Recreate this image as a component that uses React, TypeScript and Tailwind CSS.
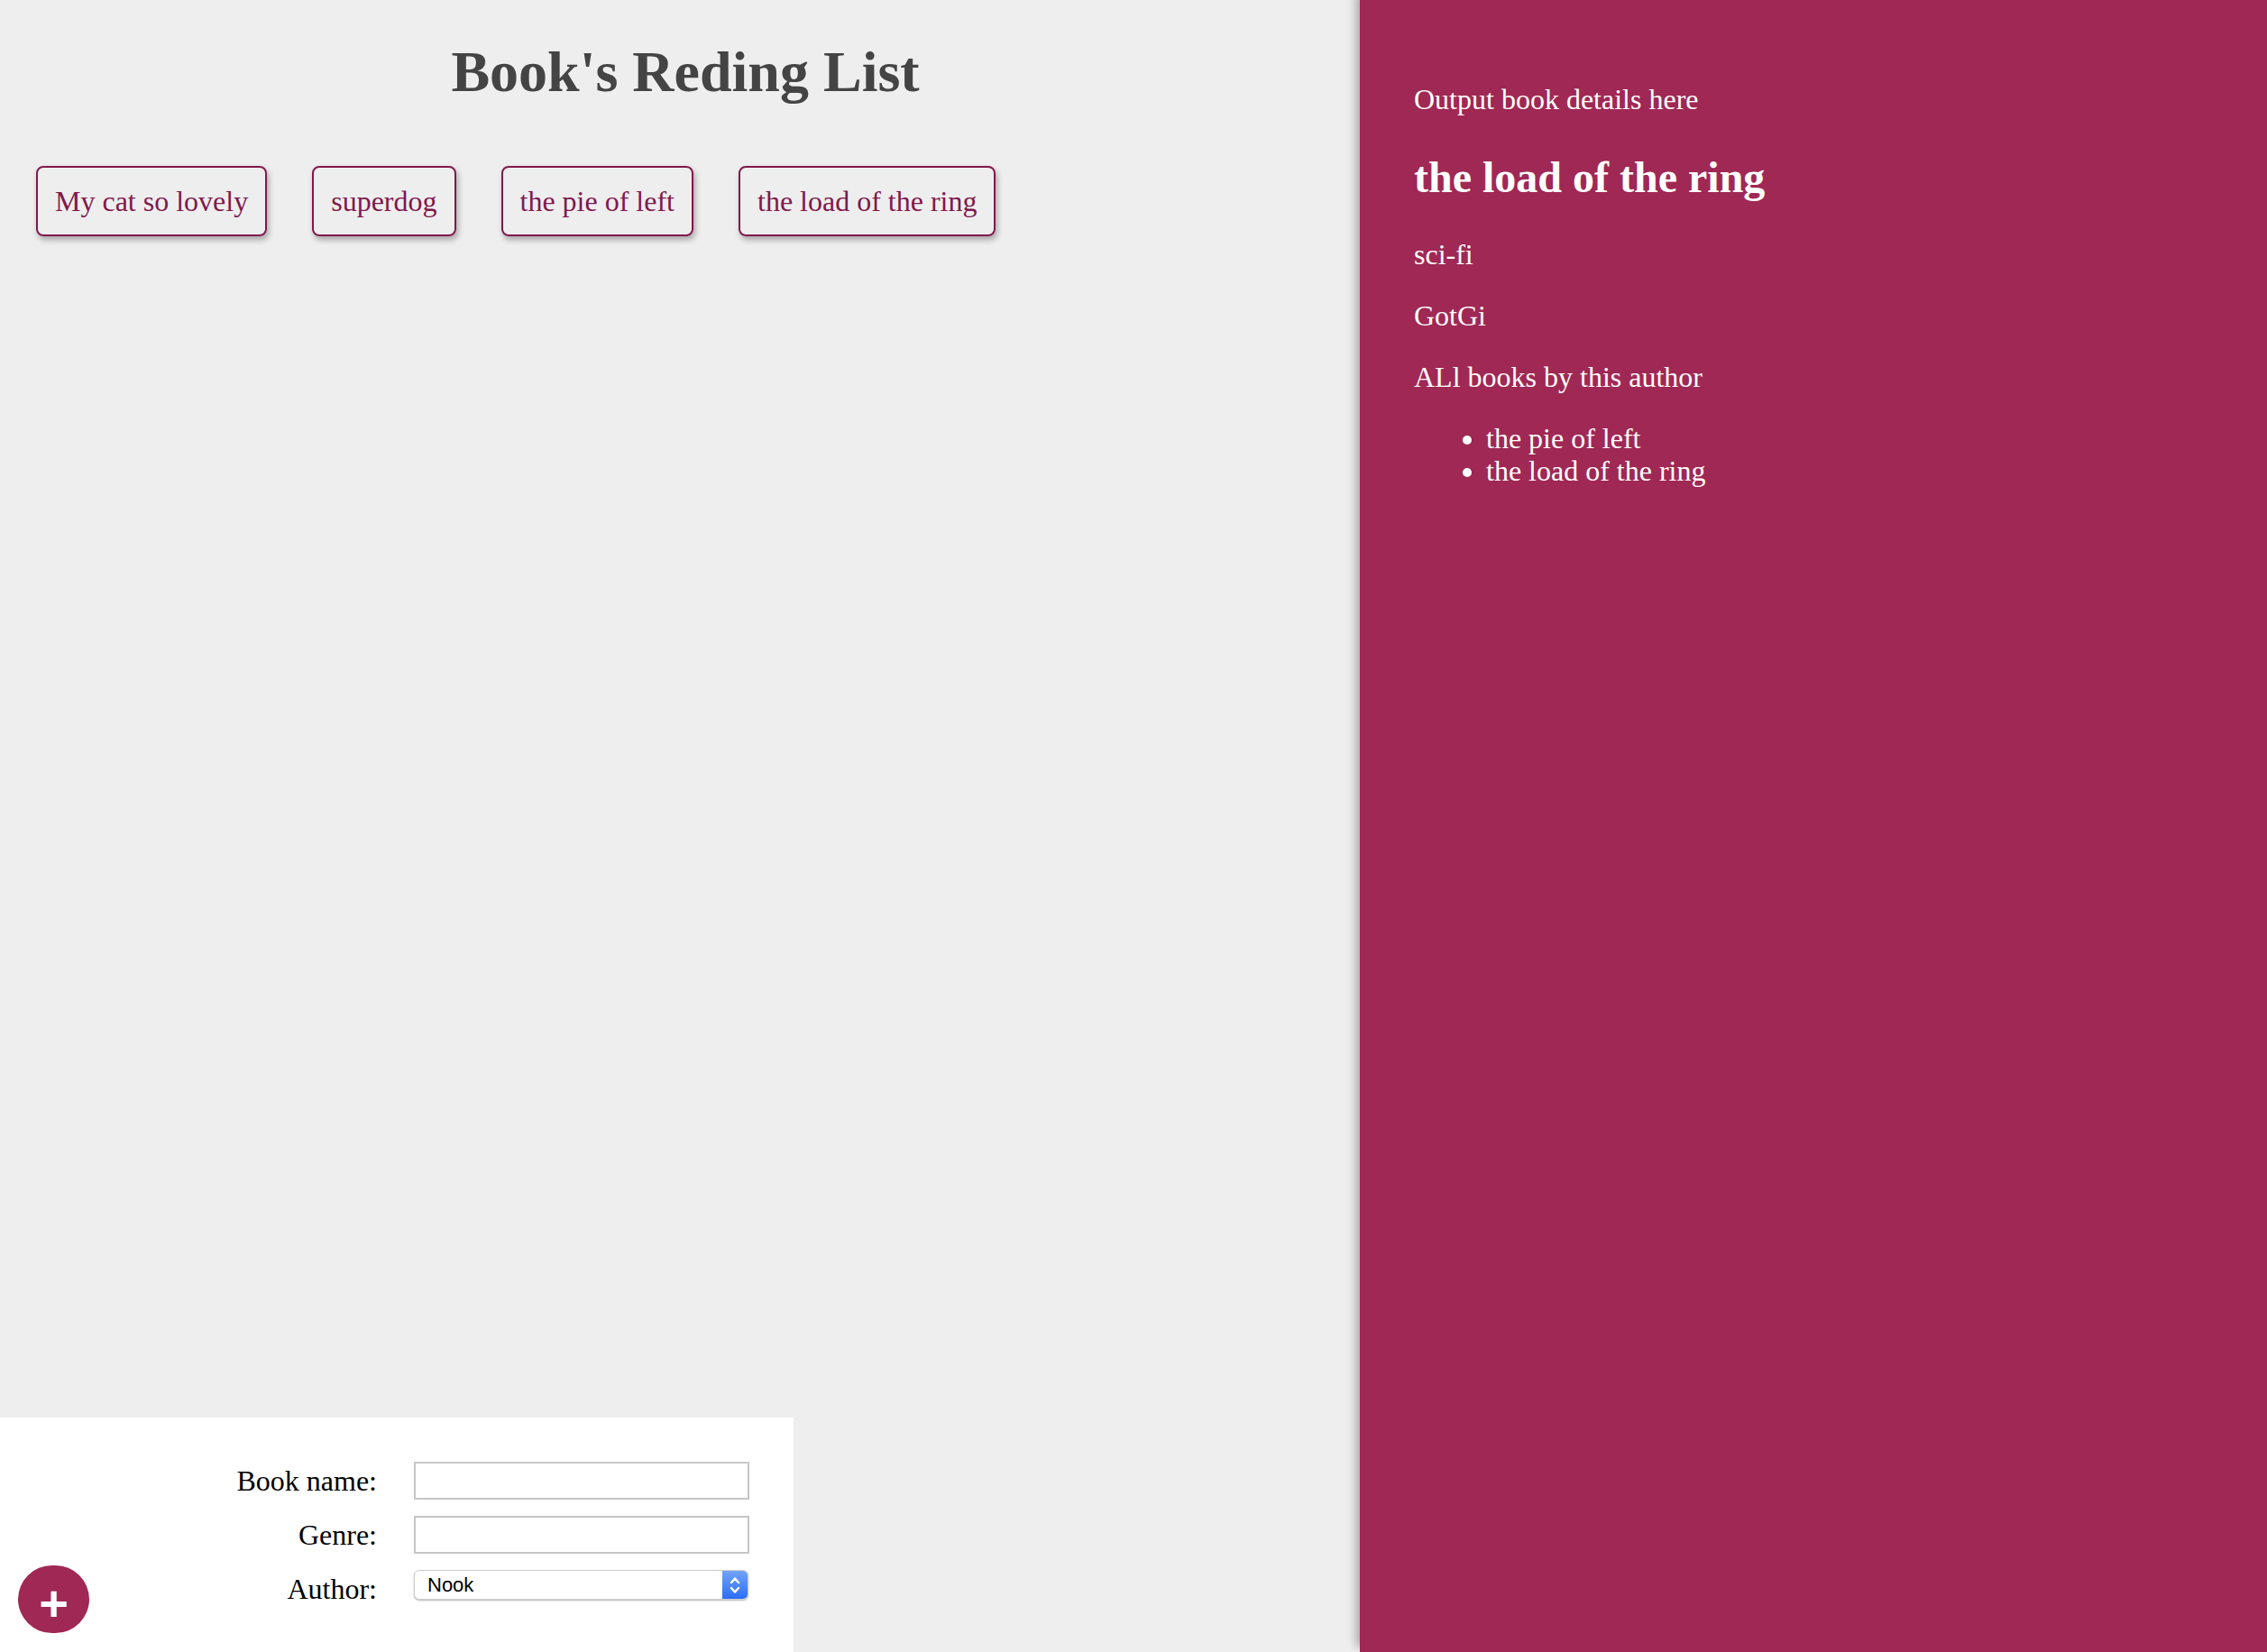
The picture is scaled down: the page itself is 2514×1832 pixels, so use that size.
import React from "react";

const books = ["My cat so lovely", "superdog", "the pie of left", "the load of the ring"];

function Field({ label, children, mt }: { label: string; children: React.ReactNode; mt: string }) {
  return (
    <div className="flex items-start h-[60px]">
      <div className="w-[390px] text-right pr-[12px] pt-[12px] text-[32px] leading-[36.8px] text-black">{label}</div>
      <div className={`ml-[29px] ${mt}`}>{children}</div>
    </div>
  );
}

export default function App() {
  return (
    <div className="w-[2514px] h-[1832px] flex bg-[#eeeeee] overflow-hidden font-['Liberation_Serif','Times_New_Roman',serif]">
      {/* Left main column */}
      <div className="w-[1508px] h-full flex flex-col px-[40px]">
        <h1 className="mt-[43px] pl-[12px] text-center text-[64px] leading-[73.6px] font-bold text-[#444444]">
          Book's Reding List
        </h1>
        <ul className="mt-[67px] flex gap-[50px] list-none p-0">
          {books.map((b) => (
            <li
              key={b}
              className="border-2 border-[#80194c] rounded-[8px] px-[19px] py-[19px] text-[32px] leading-[36px] text-[#80194c] shadow-[2px_4px_6px_rgba(0,0,0,0.3)] cursor-pointer whitespace-nowrap"
            >
              {b}
            </li>
          ))}
        </ul>
        <form className="relative mt-auto -ml-[40px] w-[880px] h-[260px] bg-white px-[40px] pt-[40px]">
          <Field label="Book name:" mt="mt-[9px]">
            <input className="block w-[372px] h-[42px] border-2 border-[#c6c6c6] bg-white outline-none" />
          </Field>
          <Field label="Genre:" mt="mt-[9px]">
            <input className="block w-[372px] h-[42px] border-2 border-[#c6c6c6] bg-white outline-none" />
          </Field>
          <Field label="Author:" mt="mt-[9px]">
            <div className="flex w-[371px] h-[33px] rounded-[6px] bg-white border border-[#cfcfcf] shadow-[0_1px_2px_rgba(0,0,0,0.3)] overflow-hidden">
              <div className="flex-1 pl-[14px] flex items-center text-[22px] text-black font-['Liberation_Sans',Arial,sans-serif]">
                Nook
              </div>
              <div className="w-[28px] h-full bg-gradient-to-b from-[#72a3f7] to-[#2a6cf5] flex items-center justify-center">
                <svg width="14" height="22" viewBox="0 0 14 22" fill="none" stroke="white" strokeWidth="2.4" strokeLinecap="round" strokeLinejoin="round">
                  <path d="M3 8 L7 3.5 L11 8" />
                  <path d="M3 14 L7 18.5 L11 14" />
                </svg>
              </div>
            </div>
          </Field>
          <button
            type="button"
            className="absolute left-[20px] bottom-[21px] w-[79px] h-[75px] rounded-full bg-[#a02854] text-white flex items-center justify-center"
          >
            <span className="block pt-[8px] text-[56px] leading-[56px] font-bold font-['Liberation_Sans',Arial,sans-serif]">+</span>
          </button>
        </form>
      </div>

      {/* Right details panel */}
      <div className="relative z-10 w-[1006px] h-full bg-[#a02854] text-white px-[60px] pt-[60px] shadow-[-4px_-6px_10px_rgba(0,0,0,0.3)]">
        <p className="mt-[32px] mb-[32px] text-[32px] leading-[36.8px]">Output book details here</p>
        <div>
          <h2 className="my-[40px] text-[48px] leading-[55.2px] font-bold">the load of the ring</h2>
          <p className="my-[32px] text-[32px] leading-[36px]">sci-fi</p>
          <p className="my-[32px] text-[32px] leading-[36px]">GotGi</p>
          <p className="my-[32px] text-[32px] leading-[36px]">ALl books by this author</p>
          <ul className="my-[32px] pl-[80px] list-disc text-[32px] leading-[36.4px]">
            <li>the pie of left</li>
            <li>the load of the ring</li>
          </ul>
        </div>
      </div>
    </div>
  );
}
